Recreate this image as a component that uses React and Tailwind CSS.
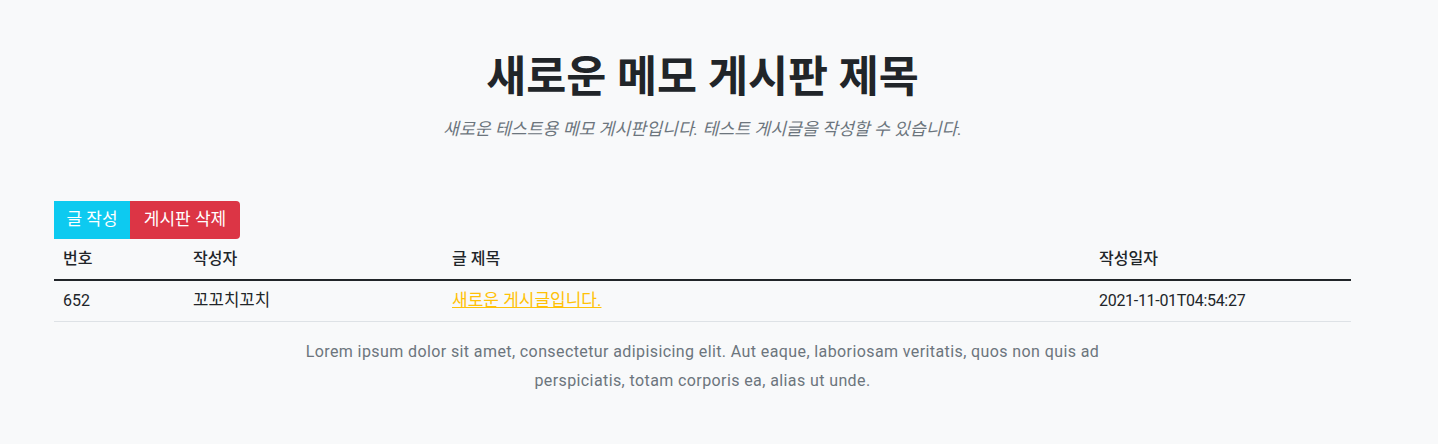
export default function App() {
  const posts = [
    { id: 652, writer: "꼬꼬치꼬치", title: "새로운 게시글입니다.", createdAt: "2021-11-01T04:54:27" },
  ];

  return (
    <div
      className="min-h-screen w-full bg-[#f8f9fa] text-[#212529]"
      style={{ fontFamily: "Roboto, 'Noto Sans CJK KR', sans-serif" }}
    >
      <div className="w-[1297px] ml-[54px]">
        <div className="pt-[51px] text-center">
          <h1 className="text-[43.5px] font-bold leading-[54px]">새로운 메모 게시판 제목</h1>
          <p className="mt-[12px] text-[17.25px] italic text-[#6c757d] leading-6">
            새로운 테스트용 메모 게시판입니다. 테스트 게시글을 작성할 수 있습니다.
          </p>
        </div>

        <div className="mt-[60px] flex">
          <button className="h-[38px] w-[76px] bg-[#0dcaf0] text-white text-[17px]">글 작성</button>
          <button className="h-[38px] w-[110px] bg-[#dc3545] text-white text-[17px] rounded-r-[4px]">
            게시판 삭제
          </button>
        </div>

        <table className="w-full border-collapse text-base">
          <thead>
            <tr className="border-b-2 border-[#212529] h-[41px] text-left">
              <th className="w-[130px] px-[9px] font-medium">번호</th>
              <th className="w-[259px] px-[9px] font-medium">작성자</th>
              <th className="w-[647px] px-[9px] font-medium">글 제목</th>
              <th className="px-[9px] font-medium">작성일자</th>
            </tr>
          </thead>
          <tbody>
            {posts.map((post) => (
              <tr key={post.id} className="border-b border-[#dee2e6] h-[41px]">
                <td className="px-[9px]">{post.id}</td>
                <td className="px-[9px] text-[16.8px]">{post.writer}</td>
                <td className="px-[9px]">
                  <a href="#" className="text-[#ffc107] text-[17px] underline">
                    {post.title}
                  </a>
                </td>
                <td className="px-[9px] tracking-[-0.3px]">{post.createdAt}</td>
              </tr>
            ))}
          </tbody>
        </table>

        <p className="mt-[15px] text-center text-base leading-[29px] tracking-[0.4px] text-[#6c757d]">
          Lorem ipsum dolor sit amet, consectetur adipisicing elit. Aut eaque, laboriosam veritatis, quos non quis ad
          <br />
          perspiciatis, totam corporis ea, alias ut unde.
        </p>
      </div>
    </div>
  );
}
